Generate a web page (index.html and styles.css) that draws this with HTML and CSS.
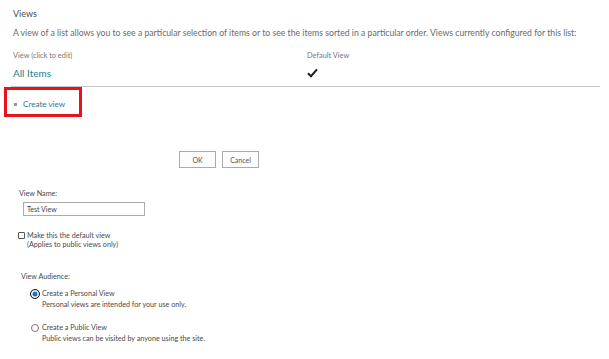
FILE: index.html
```html
<!DOCTYPE html>
<html lang="en">
<head>
  <meta charset="UTF-8">
  <title>List Settings | Views</title>
  <link rel="stylesheet" href="styles.css">
</head>
<body>

  <!-- Views list -->
  <div class="views">
    <h2>Views</h2>
    <p class="views-desc">A view of a list allows you to see a particular selection of items or to see the items sorted in a particular order. Views currently configured for this list:</p>
    <div class="view-table">
      <div class="view-head">View (click to edit)</div>
      <div class="view-head">Default View</div>
      <div class="view-row"><a href="#">All Items</a></div>
      <div class="view-row">
        <svg class="tick" width="11" height="10" viewBox="0 0 11 10">
          <path d="M1 5.2 L4 8.2 L10 1.4" fill="none" stroke="#222" stroke-width="2.1"/>
        </svg>
      </div>
    </div>
  </div>

  <!-- highlighted link -->
  <div class="highlight">
    <span class="bullet"></span>
    <a href="#">Create view</a>
  </div>

  <!-- Create view form -->
  <div class="form">
    <div class="btn-row">
      <button>OK</button>
      <button>Cancel</button>
    </div>

    <label class="field-label">View Name:</label>
    <input type="text" class="name-input" value="Test View">

    <div class="check-row">
      <span class="checkbox"></span>
      <div>
        Make this the default view<br>
        (Applies to public views only)
      </div>
    </div>

    <div class="audience-label">View Audience:</div>

    <div class="radio-row">
      <span class="radio checked"></span>
      <div>
        Create a Personal View<br>
        Personal views are intended for your use only.
      </div>
    </div>

    <div class="radio-row second">
      <span class="radio"></span>
      <div>
        Create a Public View<br>
        Public views can be visited by anyone using the site.
      </div>
    </div>
  </div>

</body>
</html>
```

FILE: styles.css
```css
body {
  margin: 0;
  font-family: Lato, 'Open Sans', sans-serif;
  background-color: white;
  color: #444;
}

a {
  color: #1f7d8c;
  text-decoration: none;
}

.views {
  margin: 0 9px 0 11px;
  padding-top: 8px;
}

.views h2 {
  margin: 0;
  padding-left: 2px;
  font-size: 9px;
  line-height: 12px;
  font-weight: normal;
  color: #4a4a4a;
}

.views-desc {
  margin: 8px 0 0 0;
  padding-left: 2px;
  font-size: 8.7px;
  line-height: 10px;
  color: #6a6a6a;
  white-space: nowrap;
}

.view-table {
  display: grid;
  grid-template-columns: 294px 1fr;
  padding: 0 0 6px 2px;
  border-bottom: 1px solid #c6c6c6;
}

.view-head {
  margin-top: 13px;
  font-size: 7.4px;
  line-height: 10px;
  color: #777;
}

.view-row {
  margin-top: 6px;
  font-size: 10px;
  line-height: 13px;
}

.tick {
  display: block;
  margin-top: 1px;
}

.highlight {
  box-sizing: border-box;
  width: 78px;
  height: 30px;
  margin-left: 4px;
  border: 3px solid #e8121c;
  padding: 5px 0 0 7px;
  display: flex;
  align-items: center;
  font-size: 8.1px;
  line-height: 11px;
  gap: 6px;
}

.bullet {
  width: 3px;
  height: 3px;
  background-color: #999;
}

.form {
  font-size: 7.2px;
  line-height: 9px;
  color: #4a4a4a;
}

.btn-row {
  display: flex;
  gap: 6px;
  margin: 34px 0 0 179px;
}

.btn-row button {
  width: 37px;
  height: 17px;
  padding: 0;
  font-family: Lato, sans-serif;
  font-size: 7px;
  color: #555;
  background-color: #fdfdfd;
  border: 1px solid #ababab;
}

.field-label {
  display: block;
  margin: 21px 0 0 19px;
}

.name-input {
  display: block;
  box-sizing: border-box;
  width: 122px;
  height: 14px;
  margin: 4px 0 0 23px;
  padding: 0 3px;
  font-family: Lato, sans-serif;
  font-size: 7px;
  color: #444;
  border: 1px solid #ababab;
  outline: none;
}

.check-row {
  display: flex;
  gap: 2px;
  margin: 15px 0 0 18px;
}

.checkbox {
  box-sizing: border-box;
  width: 7px;
  height: 7px;
  margin-top: 1px;
  border: 1px solid #555;
  border-radius: 1px;
}

.audience-label {
  margin: 23px 0 0 21px;
}

.radio-row {
  display: flex;
  gap: 2px;
  margin: 7px 0 0 30px;
  line-height: 11px;
}

.radio-row.second {
  margin-top: 12px;
  margin-left: 31px;
}

.radio {
  box-sizing: border-box;
  width: 8px;
  height: 8px;
  margin: 2px 1px 0 0;
  border: 1px solid #777;
  border-radius: 50%;
}

.radio.checked {
  width: 10px;
  height: 10px;
  margin: 1px 0 0 0;
  border: 1.5px solid #1b1b1b;
  background-color: #1a6fd6;
  box-shadow: inset 0 0 0 1.5px #fff;
}
```
